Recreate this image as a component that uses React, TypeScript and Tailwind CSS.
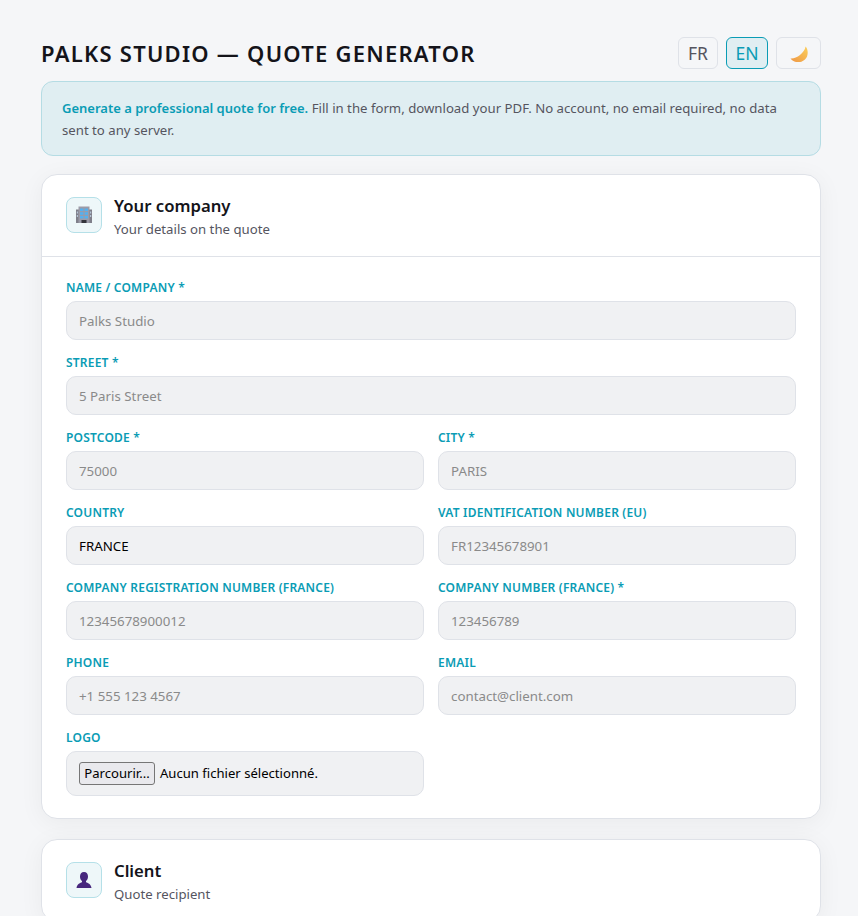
const font = { fontFamily: '"Noto Sans", "Open Sans", sans-serif' };

const inputClass =
  'h-[39px] w-full rounded-[10px] border border-[#dfe2e8] bg-[#f0f1f3] px-3 text-[13.3px] text-black outline-none placeholder:text-[#8a8a8a]';

const labelClass =
  'mb-[5px] block text-[12px] leading-[17px] font-semibold tracking-[0.2px] text-[#0a9cb5] uppercase';

const BuildingIcon = () => (
  <svg width="16" height="18" viewBox="0 0 16 18">
    <rect x="0" y="3.500" width="16" height="13.500" fill="#7f7f8a" />
    <rect x="2.500" y="0.500" width="11" height="16.500" fill="#9b9ba8" />
    <rect x="0.800" y="5.500" width="1.200" height="2" fill="#b4c4d4" />
    <rect x="0.800" y="9" width="1.200" height="2" fill="#b4c4d4" />
    <rect x="14" y="5.500" width="1.200" height="2" fill="#b4c4d4" />
    <rect x="14" y="9" width="1.200" height="2" fill="#b4c4d4" />
    <rect x="4" y="2.500" width="3.400" height="2.600" fill="#55b0ee" />
    <rect x="8.600" y="2.500" width="3.400" height="2.600" fill="#55b0ee" />
    <rect x="4" y="6.200" width="3.400" height="2.600" fill="#55b0ee" />
    <rect x="8.600" y="6.200" width="3.400" height="2.600" fill="#55b0ee" />
    <rect x="4" y="9.900" width="3.400" height="2.600" fill="#55b0ee" />
    <rect x="8.600" y="9.900" width="3.400" height="2.600" fill="#55b0ee" />
    <rect x="5.500" y="14" width="5" height="3" fill="#33333b" />
  </svg>
);

const PersonIcon = () => (
  <svg width="16" height="18" viewBox="0 0 16 18">
    <path
      d="M8 1C5.400 1 4 3 4 5.400c0 2 .8 3.600 2 4.600v1.200C3.600 12 1 13.200.5 17h15c-.5-3.800-3.100-5-5.500-5.800V10c1.200-1 2-2.600 2-4.600C12 3 10.600 1 8 1z"
      fill="#47277d"
    />
  </svg>
);

const MoonIcon = () => (
  <svg width="18" height="18" viewBox="0 -2 18 18">
    <defs>
      <linearGradient id="moon" x1="1" y1="0" x2="0" y2="1">
        <stop offset="0" stopColor="#fbcf5c" />
        <stop offset="1" stopColor="#ee9645" />
      </linearGradient>
    </defs>
    <path
      d="M15.600.6C18.500 4 18.500 10 15 13.500 11.500 17 4 17.500 .5 12.500 3.500 12.800 7 11.500 10 9 13 6.500 15 4 15.600.6z"
      fill="url(#moon)"
    />
  </svg>
);

const Field = ({ label, placeholder, value }: { label: string; placeholder?: string; value?: string }) => (
  <div>
    <label className={labelClass}>{label}</label>
    <input className={inputClass} placeholder={placeholder} defaultValue={value} />
  </div>
);

const CardHeader = ({ icon, title, subtitle }: { icon: React.ReactNode; title: string; subtitle: string }) => (
  <div className="flex items-start gap-3 px-6 pt-[20px] pb-[18px]">
    <div className="mt-[2px] flex h-9 w-9 items-center justify-center rounded-[8px] border border-[#b5e0e8] bg-[#eef7f9]">
      {icon}
    </div>
    <div>
      <h2 className="text-[16.700px] leading-[22px] font-semibold text-[#14141a]">{title}</h2>
      <p className="mt-[3px] text-[13.200px] leading-[18px] text-[#55555f]">{subtitle}</p>
    </div>
  </div>
);

export default function App() {
  return (
    <div className="h-[916px] overflow-hidden bg-[#f5f6f8]" style={font}>
      <div className="ml-[41px] w-[780px] pt-[37px]">
        {/* Title + language switch */}
        <header className="flex h-[32px] items-center justify-between">
          <h1 className="text-[22px] font-semibold tracking-[1.250px] text-[#14141a]">
            PALKS STUDIO — QUOTE GENERATOR
          </h1>
          <div className="flex items-center gap-2">
            <button className="h-[32px] w-[40px] rounded-[6px] border border-[#dfe2e8] text-[17.500px] text-[#55555f]">FR</button>
            <button className="h-[32px] w-[42px] rounded-[6px] border border-[#0a9cb5] bg-[#e0eef2] text-[17.500px] text-[#0a9cb5]">EN</button>
            <button className="flex h-[32px] w-[45px] items-center justify-center rounded-[6px] border border-[#dfe2e8]">
              <MoonIcon />
            </button>
          </div>
        </header>

        {/* Intro */}
        <div className="mt-[12px] rounded-[12px] border border-[#b5dce4] bg-[#e0eef2] px-5 pt-[15px] pb-[14px] text-[13.200px] leading-[22px] text-[#55555f]">
          <p>
            <strong className="text-[13px] font-semibold text-[#0a9cb5]">Generate a professional quote for free.</strong>{' '}
            Fill in the form, download your PDF. No account, no email required, no data
          </p>
          <p>sent to any server.</p>
        </div>

        {/* Your company */}
        <section className="mt-[18px] rounded-[16px] border border-[#dfe2e8] bg-white shadow-[0_4px_24px_rgba(0,0,0,0.05)]">
          <CardHeader icon={<BuildingIcon />} title="Your company" subtitle="Your details on the quote" />
          <div className="border-t border-[#dfe2e8] px-6 pt-[22px] pb-[22px]">
            <div className="flex flex-col gap-[14px]">
              <Field label="Name / Company *" placeholder="Palks Studio" />
              <Field label="Street *" placeholder="5 Paris Street" />
              <div className="grid grid-cols-2 gap-x-[14px] gap-y-[14px]">
                <Field label="Postcode *" placeholder="75000" />
                <Field label="City *" placeholder="PARIS" />
                <Field label="Country" value="FRANCE" />
                <Field label="VAT identification number (EU)" placeholder="FR12345678901" />
                <Field label="Company registration number (France)" placeholder="12345678900012" />
                <Field label="Company number (France) *" placeholder="123456789" />
                <Field label="Phone" placeholder="+1 555 123 4567" />
                <Field label="Email" placeholder="contact@client.com" />
                <div>
                  <label className={labelClass}>Logo</label>
                  <div className="flex h-[45px] items-center gap-[4px] rounded-[10px] border border-[#dfe2e8] bg-[#f0f1f3] px-3 text-[13.100px] text-black">
                    <button className="h-[23px] w-[76px] rounded-[3px] border border-[#767676] bg-[#e9e9ed] text-[13.100px] leading-none">
                      Parcourir...
                    </button>
                    <span className="ml-[1px]">Aucun fichier sélectionné.</span>
                  </div>
                </div>
              </div>
            </div>
          </div>
        </section>

        {/* Client */}
        <section className="mt-[20px] rounded-[16px] border border-[#dfe2e8] bg-white shadow-[0_4px_24px_rgba(0,0,0,0.05)]">
          <CardHeader icon={<PersonIcon />} title="Client" subtitle="Quote recipient" />
        </section>
      </div>
    </div>
  );
}
